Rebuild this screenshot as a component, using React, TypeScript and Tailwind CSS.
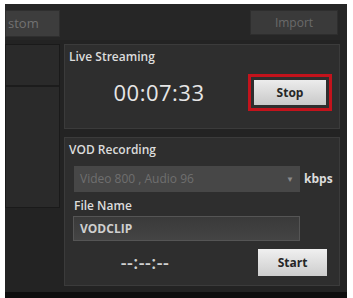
const font = { fontFamily: '"Open Sans", "Noto Sans", sans-serif' };

const App = () => {
  return (
    <div className="w-[353px] h-[298px] bg-white pt-[4px] pl-[5px] pr-[6px]" style={font}>
      <div className="h-[294px] bg-[#232323] flex flex-col border-b-[6px] border-[#0e0e0e]">
        {/* top bar */}
        <div className="h-[36px] flex items-start pt-[6px] bg-[#262626]">
          <div className="w-[55px] h-[27px] bg-[#3d3d3d] border border-[#2f2f2f] flex items-center pl-[2px]">
            <span className="text-[13px] text-[#727272] whitespace-nowrap">stom</span>
          </div>
          <div className="ml-auto mr-[9px] w-[88px] h-[25px] bg-[#3a3a3a] border border-[#2e2e2e] flex items-center justify-center">
            <span className="text-[12px] text-[#6a6a6a]">Import</span>
          </div>
        </div>

        {/* body */}
        <div className="flex pt-[4px] pr-[7px]">
          <div className="w-[55px] h-[164px] bg-[#2a2a2a] border border-[#1a1a1a] flex flex-col">
            <div className="h-[42px] border-b-2 border-[#1c1c1c]" />
          </div>

          <div className="ml-[4px] w-[276px] flex flex-col gap-[8px]">
            {/* live streaming */}
            <div className="h-[85px] bg-[#2e2e2e] border border-[#3b3b3b] pl-[4px] pt-[4px]">
              <div className="text-[12px] font-semibold text-[#dcdcdc] leading-[16px]">Live Streaming</div>
              <div className="flex items-center mt-[8px]">
                <div className="w-[180px] text-center text-[22px] text-[#e6e6e6] leading-[26px] tracking-[0.5px]">00:07:33</div>
                <div className="ml-[-1px] w-[84px] h-[37px] border-[3px] border-[#c3131c] p-[3px] mt-[1px]">
                  <div className="h-full bg-gradient-to-b from-[#ececec] to-[#c9c9c9] flex items-center justify-center">
                    <span className="text-[12px] font-bold text-[#262626]">Stop</span>
                  </div>
                </div>
              </div>
            </div>

            {/* vod recording */}
            <div className="h-[149px] bg-[#2e2e2e] border border-[#3b3b3b] pl-[4px] pt-[4px]">
              <div className="text-[12px] font-semibold text-[#dcdcdc] leading-[16px]">VOD Recording</div>
              <div className="flex items-center mt-[8px] ml-[5px]">
                <div className="w-[226px] h-[26px] bg-[#474747] flex items-center pl-[6px] pr-[6px]">
                  <span className="text-[12px] text-[#6f6f6f] whitespace-nowrap">Video 800 , Audio 96</span>
                  <span className="ml-auto text-[8px] text-[#8a8a8a]">▼</span>
                </div>
                <span className="ml-[4px] text-[12px] font-bold text-[#dcdcdc]">kbps</span>
              </div>
              <div className="ml-[5px] mt-[6px] text-[12px] font-semibold text-[#dcdcdc] leading-[16px]">File Name</div>
              <div className="ml-[4px] mt-[2px] w-[227px] h-[25px] bg-gradient-to-b from-[#3a3a3a] to-[#444] border border-[#555] flex items-center pl-[6px]">
                <span className="text-[12px] font-bold text-[#cfcfcf]">VODCLIP</span>
              </div>
              <div className="flex items-center mt-[8px]">
                <div className="w-[152px] text-center text-[18px] font-semibold text-[#d0d0d0] tracking-[0.5px]">--:--:--</div>
                <div className="ml-[37px] w-[69px] h-[27px] bg-gradient-to-b from-[#f0f0f0] to-[#cdcdcd] flex items-center justify-center">
                  <span className="text-[12px] font-bold text-[#262626]">Start</span>
                </div>
              </div>
            </div>
          </div>
        </div>
      </div>
    </div>
  );
};

export default App;
